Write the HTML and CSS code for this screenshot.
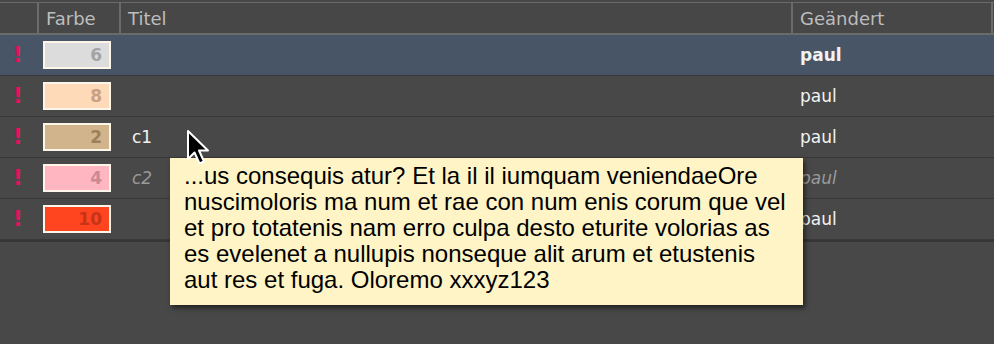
FILE: index.html
```html
<!DOCTYPE html>
<html lang="de">

<head>
    <meta charset="UTF-8">
    <title>Liste</title>
    <link rel="stylesheet" href="styles.css">
</head>

<body>
    <div class="table">
        <div class="head">
            <div class="hcell"></div>
            <div class="hcell">Farbe</div>
            <div class="hcell">Titel</div>
            <div class="hcell">Geändert</div>
        </div>

        <div class="row selected">
            <div class="flag">!</div>
            <div class="cell"><span class="swatch grey">6</span></div>
            <div class="cell title"></div>
            <div class="cell user bold">paul</div>
        </div>
        <div class="row">
            <div class="flag">!</div>
            <div class="cell"><span class="swatch peach">8</span></div>
            <div class="cell title"></div>
            <div class="cell user">paul</div>
        </div>
        <div class="row">
            <div class="flag">!</div>
            <div class="cell"><span class="swatch tan">2</span></div>
            <div class="cell title">c1</div>
            <div class="cell user">paul</div>
        </div>
        <div class="row">
            <div class="flag">!</div>
            <div class="cell"><span class="swatch pink">4</span></div>
            <div class="cell title muted">c2</div>
            <div class="cell user muted">paul</div>
        </div>
        <div class="row">
            <div class="flag">!</div>
            <div class="cell"><span class="swatch red">10</span></div>
            <div class="cell title"></div>
            <div class="cell user">paul</div>
        </div>
    </div>

    <div class="tooltip">...us consequis atur? Et la il il iumquam veniendaeOre<br>nuscimoloris ma num et rae con num enis corum que vel<br>et pro totatenis nam erro culpa desto eturite volorias as<br>es evelenet a nullupis nonseque alit arum et etustenis<br>aut res et fuga. Oloremo xxxyz123</div>

    <svg class="cursor" width="26" height="38" viewBox="0 0 26 38">
        <path d="M2 2 L2 30 L8.5 23.5 L13.5 34.5 L18 32.5 L13 21.5 L22 21.5 Z" fill="#000" stroke="#fff" stroke-width="2" stroke-linejoin="round"/>
    </svg>
</body>

</html>
```

FILE: styles.css
```css
body {
    margin: 0;
    background-color: #484848;
    font-family: 'DejaVu Sans', Verdana, sans-serif;
    font-size: 17px;
    width: 994px;
    height: 344px;
    overflow: hidden;
    position: relative;
}

.table {
    border-bottom: 2px solid #363636;
}

.head {
    display: grid;
    grid-template-columns: 39px 82px 672px 200px;
    margin-top: 2px;
    border-top: 1px solid #6b6b6b;
    border-bottom: 2px solid #6b6b6b;
    height: 30px;
    background-color: #474747;
    font-size: 18px;
}

.hcell {
    border-right: 2px solid #6b6b6b;
    color: #bdbdbd;
    padding-left: 7px;
    display: flex;
    align-items: center;
}

.row {
    display: grid;
    grid-template-columns: 39px 82px 672px 200px;
    height: 40px;
    border-bottom: 1px solid #383838;
    background-color: #484848;
}

.row.selected {
    background-color: #485567;
}

.flag {
    color: #e3145a;
    font-weight: bold;
    font-size: 21px;
    display: flex;
    align-items: center;
    padding-left: 13px;
}

.cell {
    display: flex;
    align-items: center;
    color: #f2f2f2;
}

.title {
    padding-left: 11px;
}

.user {
    padding-left: 7px;
}

.bold {
    font-weight: bold;
}

.muted {
    color: #9a9a9a;
    font-style: italic;
}

.swatch {
    box-sizing: border-box;
    width: 68px;
    height: 28px;
    margin-left: 4px;
    border: 2px solid #fdf5e8;
    font-weight: bold;
    text-align: right;
    padding-right: 7px;
    line-height: 24px;
}

.grey { background-color: #dcdcdc; color: #a3a3a3; }
.peach { background-color: #ffdab9; color: #c9a182; }
.tan { background-color: #d2b48c; color: #9d7f58; }
.pink { background-color: #ffb6c1; color: #c98a94; }
.red { background-color: #ff4520; color: #c63318; }

.tooltip {
    position: absolute;
    left: 170px;
    top: 158px;
    width: 633px;
    height: 147px;
    box-sizing: border-box;
    padding: 5px 0 0 14px;
    background-color: #fef4c6;
    box-shadow: 2px 3px 5px rgba(0, 0, 0, 0.55);
    font-family: 'Liberation Sans', Arial, sans-serif;
    font-size: 24px;
    line-height: 26px;
    color: #000;
    white-space: nowrap;
}

.cursor {
    position: absolute;
    left: 186px;
    top: 129px;
}
```
